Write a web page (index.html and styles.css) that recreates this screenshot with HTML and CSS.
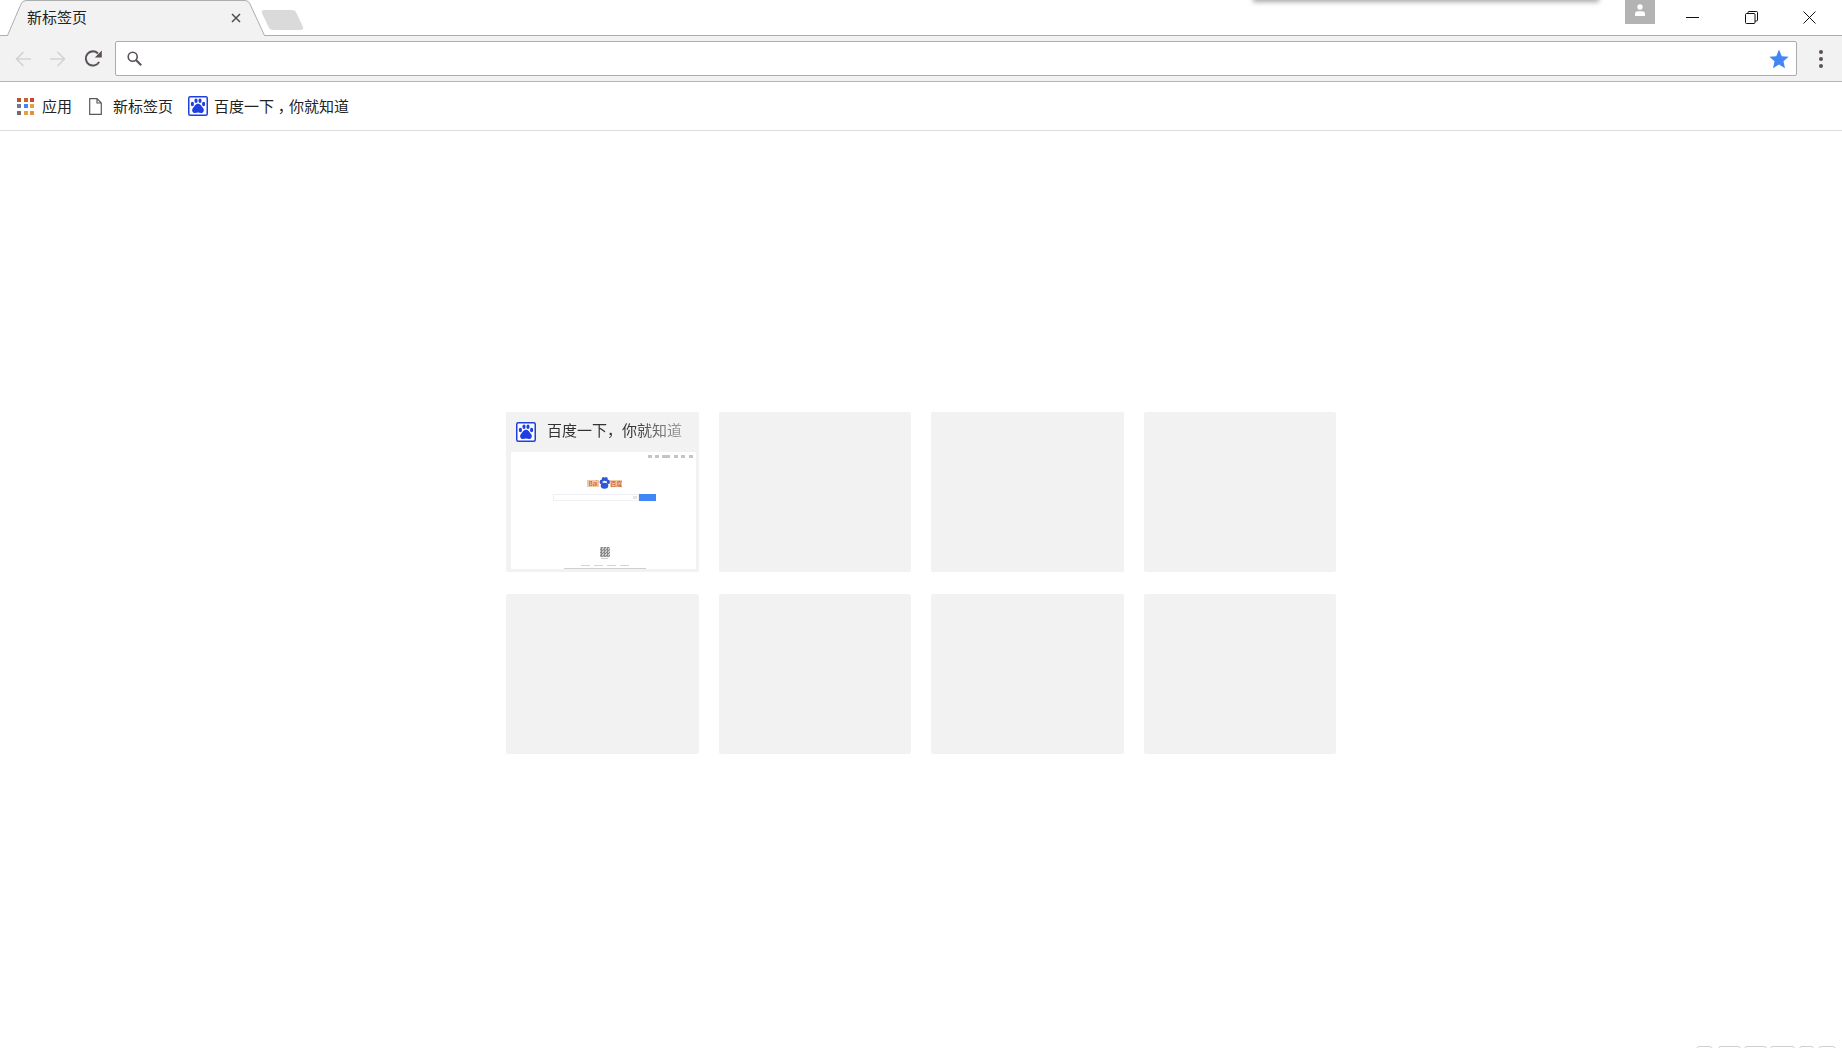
FILE: index.html
```html
<!DOCTYPE html>
<html lang="zh-CN">
<head>
    <meta charset="UTF-8">
    <title>新标签页</title>
    <link rel="stylesheet" href="styles.css">
</head>
<body>
    <div class="tabstrip">
        <div class="tab">
            <svg class="tab-shape" width="272" height="37" viewBox="0 0 272 37">
                <path d="M0 35.5H7.5L21 4Q22.5 .5 26 .5H245Q248.500 .5 250 4L264.500 35.500H272V37H0Z" fill="#f2f2f2" stroke="none"/>
                <path d="M0 35.500H7.500L21 4Q22.500 .5 26 .5H245Q248.500 .5 250 4L264.500 35.500H272" fill="none" stroke="#adadad"/>
            </svg>
            <span class="tab-title">新标签页</span>
            <svg class="tab-close" width="10" height="10" viewBox="0 0 10 10">
                <path d="M1 1L9 9M9 1L1 9" stroke="#4d4d4d" stroke-width="1.5" fill="none"/>
            </svg>
        </div>
        <svg class="new-tab" width="43" height="22" viewBox="0 0 43 22">
            <path d="M3 1H31Q34 1 35 3L42 18Q43 21 39 21H12Q9 21 8 19L1 4Q0 1 3 1Z" fill="#dadada"/>
        </svg>
        <div class="avatar">
            <svg width="14" height="14" viewBox="0 0 14 14">
                <circle cx="7" cy="4" r="2.700" fill="#fff"/>
                <path d="M2 13V11Q2 8.500 5 8.200H9Q12 8.500 12 11V13Z" fill="#fff"/>
            </svg>
        </div>
        <div class="window-controls">
            <div class="win-btn">
                <svg width="13" height="13" viewBox="0 0 13 13"><path d="M0 6.500H13" stroke="#111" fill="none"/></svg>
            </div>
            <div class="win-btn">
                <svg width="13" height="13" viewBox="0 0 13 13">
                    <rect x=".5" y="2.500" width="9.500" height="10" rx="1" fill="none" stroke="#111"/>
                    <path d="M3 2.500V1.500Q3 .5 4 .5H11.500Q12.500 .5 12.500 1.500V9Q12.500 10 11.500 10H10" fill="none" stroke="#111"/>
                </svg>
            </div>
            <div class="win-btn">
                <svg width="13" height="13" viewBox="0 0 13 13"><path d="M.5 .5L12.500 12.500M12.500 .5L.5 12.500" stroke="#111" fill="none"/></svg>
            </div>
        </div>
        <div class="popup-shadow"></div>
    </div>

    <div class="toolbar">
        <div class="nav-btn nav-off">
            <svg width="16" height="16" viewBox="0 0 16 16"><path d="M16 8H1.500M8.500 1L1.500 8L8.500 15" stroke="#d3d3d3" stroke-width="1.600" fill="none"/></svg>
        </div>
        <div class="nav-btn nav-off">
            <svg width="16" height="16" viewBox="0 0 16 16"><path d="M0 8H14.500M7.500 1L14.500 8L7.500 15" stroke="#d3d3d3" stroke-width="1.600" fill="none"/></svg>
        </div>
        <div class="nav-btn nav-reload">
            <svg width="18" height="18" viewBox="0 0 17 17">
                <path d="M14.300 11.200A6.700 6.700 0 1 1 13.200 3.300" stroke="#5a5059" stroke-width="1.900" fill="none"/>
                <path d="M10.200 7H16.800V.5Z" fill="#5a5059"/>
            </svg>
        </div>
        <div class="omnibox">
            <svg class="omni-search" width="15" height="15" viewBox="0 0 15 15">
                <circle cx="5.700" cy="5.700" r="4.500" stroke="#5a5059" stroke-width="1.600" fill="none"/>
                <path d="M9 9L14.200 14.200" stroke="#5a5059" stroke-width="2" fill="none"/>
            </svg>
            <svg class="omni-star" width="20" height="20" viewBox="0 0 18 18">
                <path d="M9 .5L11.500 6.500L17.700 7L13 11.100L14.400 17.400L9 14L3.600 17.400L5 11.100L.3 7L6.500 6.500Z" fill="#4285f4"/>
            </svg>
        </div>
        <div class="menu-btn">
            <span class="menu-dot"></span>
            <span class="menu-dot"></span>
            <span class="menu-dot"></span>
        </div>
    </div>

    <div class="bookmarks">
        <div class="bookmark">
            <div class="apps-icon">
                <i style="background:#b9532f"></i><i style="background:#d0602e"></i><i style="background:#c8452f"></i>
                <i style="background:#6c7a96"></i><i style="background:#4285f4"></i><i style="background:#e8a23c"></i>
                <i style="background:#6e6e6e"></i><i style="background:#e5a13f"></i><i style="background:#df9236"></i>
            </div>
            <span>应用</span>
        </div>
        <div class="bookmark">
            <svg width="13" height="17" viewBox="0 0 13 17">
                <path d="M.7 .7H8L12.300 5V16.300H.7Z M8 .7V5H12.300" fill="#fff" stroke="#5f5560" stroke-width="1.200"/>
            </svg>
            <span>新标签页</span>
        </div>
        <div class="bookmark">
            <svg width="20" height="20" viewBox="0 0 20 20">
                <rect x=".75" y=".75" width="18.500" height="18.500" rx="1.500" fill="#fff" stroke="#1f3fe0" stroke-width="1.500"/>
                <ellipse cx="4.400" cy="8" rx="1.600" ry="2.200" fill="#1f3fe0"/>
                <ellipse cx="8" cy="4.800" rx="1.600" ry="2.300" fill="#1f3fe0"/>
                <ellipse cx="12" cy="4.800" rx="1.600" ry="2.300" fill="#1f3fe0"/>
                <ellipse cx="15.600" cy="8" rx="1.600" ry="2.200" fill="#1f3fe0"/>
                <path d="M10 7.800C12.800 7.800 13.500 10.500 15 12C16.800 14.300 15.500 17 13.300 17C12 17 11 16.500 10 16.500C9 16.500 8 17 6.700 17C4.500 17 3.200 14.300 5 12C6.500 10.500 7.200 7.800 10 7.800Z" fill="#1f3fe0"/>
            </svg>
            <span>百度一下<span class="comma">，</span>你就知道</span>
        </div>
    </div>

    <div class="ntp">
        <div class="tiles">
            <div class="tile tile-filled">
                <div class="tile-head">
                    <svg width="20" height="20" viewBox="0 0 20 20">
                        <rect x=".75" y=".75" width="18.500" height="18.500" rx="1.500" fill="#fff" stroke="#1f3fe0" stroke-width="1.500"/>
                        <ellipse cx="4.400" cy="8" rx="1.600" ry="2.200" fill="#1f3fe0"/>
                        <ellipse cx="8" cy="4.800" rx="1.600" ry="2.300" fill="#1f3fe0"/>
                        <ellipse cx="12" cy="4.800" rx="1.600" ry="2.300" fill="#1f3fe0"/>
                        <ellipse cx="15.600" cy="8" rx="1.600" ry="2.200" fill="#1f3fe0"/>
                        <path d="M10 7.800C12.800 7.800 13.500 10.500 15 12C16.800 14.300 15.500 17 13.300 17C12 17 11 16.500 10 16.500C9 16.500 8 17 6.700 17C4.500 17 3.200 14.300 5 12C6.500 10.500 7.200 7.800 10 7.800Z" fill="#1f3fe0"/>
                    </svg>
                    <span class="tile-title">百度一下，你就知道</span>
                </div>
                <div class="thumb">
                    <div class="thumb-nav">
                        <i></i><i></i><i class="wide"></i><i></i><i></i><i></i>
                    </div>
                    <div class="thumb-logo">
                        <span class="logo-word">Bai</span>
                        <svg width="11" height="12" viewBox="0 0 20 22">
                            <ellipse cx="4" cy="9" rx="3" ry="4" fill="#2f55d8"/>
                            <ellipse cx="8" cy="4" rx="3" ry="4" fill="#2f55d8"/>
                            <ellipse cx="13" cy="4" rx="3" ry="4" fill="#2f55d8"/>
                            <ellipse cx="17" cy="9" rx="3" ry="4" fill="#2f55d8"/>
                            <ellipse cx="10" cy="16" rx="7" ry="5.500" fill="#2f55d8"/>
                        </svg>
                        <span class="logo-word">百度</span>
                    </div>
                    <div class="thumb-search">
                        <div class="thumb-input"><i></i></div>
                        <div class="thumb-button"></div>
                    </div>
                    <div class="thumb-qr"></div>
                    <div class="thumb-caption"></div>
                    <div class="thumb-links">
                        <i></i><i></i><i></i><i></i>
                    </div>
                    <div class="thumb-footer"></div>
                </div>
            </div>
            <div class="tile"></div>
            <div class="tile"></div>
            <div class="tile"></div>
            <div class="tile"></div>
            <div class="tile"></div>
            <div class="tile"></div>
            <div class="tile"></div>
        </div>
    </div>

    <div class="peek">
        <i></i><i></i><i></i><i></i><i></i><i></i>
    </div>
</body>
</html>
```

FILE: styles.css
```css
/* --- Базовые стили --- */
* {
    margin: 0;
    padding: 0;
    box-sizing: border-box;
}

body {
    background: #fff;
    color: #222;
    font-family: "Noto Sans CJK SC", "Liberation Sans", sans-serif;
    font-size: 15px;
    height: 100vh;
    overflow: hidden;
    position: relative;
}

svg {
    display: block;
    flex: none;
}

/* --- Вкладки --- */
.tabstrip {
    height: 36px;
    display: flex;
    align-items: flex-start;
    position: relative;
    border-bottom: 1px solid #adadad;
}

.tab {
    width: 272px;
    height: 37px;
    flex: none;
    position: relative;
    display: flex;
    align-items: center;
    padding: 0 31px 3px 27px;
    z-index: 1;
}

.tab-shape {
    position: absolute;
    top: 0;
    left: 0;
}

.tab-title {
    position: relative;
    flex: 1;
    line-height: 34px;
}

.tab-close {
    position: relative;
    top: 1px;
}

.new-tab {
    margin: 9px 0 0 -11px;
}

.avatar {
    width: 30px;
    height: 24px;
    background: #b3b3b3;
    margin-left: auto;
    margin-right: 9px;
    display: flex;
    justify-content: center;
    padding-top: 3px;
}

.window-controls {
    display: flex;
    padding-right: 3px;
}

.win-btn {
    width: 58.500px;
    height: 35px;
    display: flex;
    justify-content: center;
    align-items: center;
}

.popup-shadow {
    position: absolute;
    top: -6px;
    left: 1255px;
    width: 342px;
    height: 6px;
    box-shadow: 0 0 5px 2px rgba(0, 0, 0, 0.35);
}

/* --- Панель адреса --- */
.toolbar {
    height: 46px;
    background: #f2f2f2;
    border-bottom: 1px solid #b5b5b5;
    display: flex;
    align-items: center;
    padding: 0 0 0 6px;
}

.nav-btn {
    width: 35px;
    height: 34px;
    display: flex;
    justify-content: center;
    align-items: center;
    flex: none;
}

.nav-off svg {
    margin-left: -2px;
}

.nav-reload svg {
    margin-left: -2px;
}

.omnibox {
    flex: 1;
    height: 35px;
    margin-left: 4px;
    background: #fff;
    border: 1px solid #adadad;
    border-radius: 2px;
    display: flex;
    justify-content: space-between;
    align-items: center;
    padding: 0 7px 0 11px;
}

.menu-btn {
    width: 45px;
    flex: none;
    display: flex;
    flex-direction: column;
    align-items: center;
    gap: 3px;
    padding-left: 3px;
}

.menu-dot {
    width: 4px;
    height: 4px;
    border-radius: 50%;
    background: #5a5059;
}

/* --- Закладки --- */
.bookmarks {
    height: 49px;
    border-bottom: 1px solid #dcdcdc;
    display: flex;
    align-items: center;
    padding-left: 17px;
}

.bookmark {
    display: flex;
    align-items: center;
    line-height: 20px;
}

.bookmark:nth-child(1) {
    gap: 8px;
    margin-right: 17px;
}

.bookmark:nth-child(2) {
    gap: 11px;
    margin-right: 15px;
}

.bookmark:nth-child(3) {
    gap: 6px;
}

/* запятая по центру клетки, как в оригинале */
.comma {
    font-feature-settings: "halt";
    padding: 0 3.750px;
}

.apps-icon {
    display: grid;
    grid-template-columns: repeat(3, 4px);
    grid-auto-rows: 4px;
    gap: 2.500px;
    width: 17px;
}

/* --- Плитки --- */
.ntp {
    display: flex;
    justify-content: center;
    padding-top: 281px;
}

.tiles {
    width: 830px;
    display: grid;
    grid-template-columns: repeat(4, 192.500px);
    column-gap: 20px;
    grid-auto-rows: 160px;
    row-gap: 22px;
}

.tile {
    background: #f2f2f2;
    border-radius: 2px;
}

.tile-filled {
    padding: 0 3px 3px 5px;
    display: flex;
    flex-direction: column;
}

.tile-head {
    height: 40px;
    display: flex;
    align-items: center;
    gap: 11px;
    padding-left: 5px;
}

.tile-title {
    flex: 1;
    white-space: nowrap;
    color: #333;
    line-height: 20px;
    margin-right: 12px;
    padding-bottom: 4px;
    -webkit-mask-image: linear-gradient(to right, #000 62%, rgba(0, 0, 0, 0.4) 100%);
    mask-image: linear-gradient(to right, #000 62%, rgba(0, 0, 0, 0.4) 100%);
}

/* --- Миниатюра страницы --- */
.thumb {
    flex: 1;
    background: #fff;
    overflow: hidden;
    display: flex;
    flex-direction: column;
    align-items: center;
    padding-left: 3px;
    filter: blur(0.4px);
}

.thumb-nav {
    align-self: flex-end;
    display: flex;
    gap: 3.400px;
    padding: 3px 3px 0 0;
}

.thumb-nav i {
    width: 4px;
    height: 3px;
    background: #c4c4c4;
}

.thumb-nav i.wide {
    width: 8px;
}

.thumb-logo {
    display: flex;
    align-items: center;
    gap: 0;
    height: 12px;
    margin-top: 19px;
}

.logo-word {
    background: #f0c9a8;
    color: #c8501c;
    font-size: 6px;
    line-height: 7px;
    width: 12px;
    height: 7px;
    text-align: center;
    white-space: nowrap;
}

.thumb-search {
    display: flex;
    width: 103px;
    height: 7px;
    margin-top: 5px;
}

.thumb-input {
    flex: 1;
    border: 1px solid #eef0f6;
    display: flex;
    justify-content: flex-end;
    align-items: center;
    padding-right: 1px;
}

.thumb-input i {
    width: 4px;
    height: 3px;
    background: #e4e4e4;
}

.thumb-button {
    width: 17px;
    background: #4285f4;
}

.thumb-qr {
    width: 10px;
    height: 10px;
    margin-top: 46px;
    background: repeating-conic-gradient(#8a8a8a 0 25%, #c9c9c9 0 50%) 0 0 / 3px 3px;
}

.thumb-caption {
    width: 7px;
    height: 1px;
    margin-top: 1px;
    background: #ccc;
}

.thumb-links {
    display: flex;
    gap: 4px;
    margin-top: 6px;
}

.thumb-links i {
    width: 9px;
    height: 1px;
    background: #d4d4d4;
}

.thumb-footer {
    width: 82px;
    height: 1px;
    margin-top: 2px;
    background: #d0d0d0;
}

/* --- Нижний край --- */
.peek {
    position: absolute;
    right: 5px;
    bottom: -8px;
    display: flex;
    gap: 3px;
}

.peek i {
    width: 23px;
    height: 10px;
    border: 1px solid #cfcfcf;
    border-radius: 3px;
}

.peek i:nth-child(1) {
    width: 19px;
    margin-right: 1px;
    border-radius: 6px;
}

.peek i:nth-child(4) {
    width: 25px;
    margin-right: 1px;
}

.peek i:nth-child(5) {
    width: 15px;
}

.peek i:nth-child(6) {
    width: 20px;
    border-radius: 6px;
}
```
